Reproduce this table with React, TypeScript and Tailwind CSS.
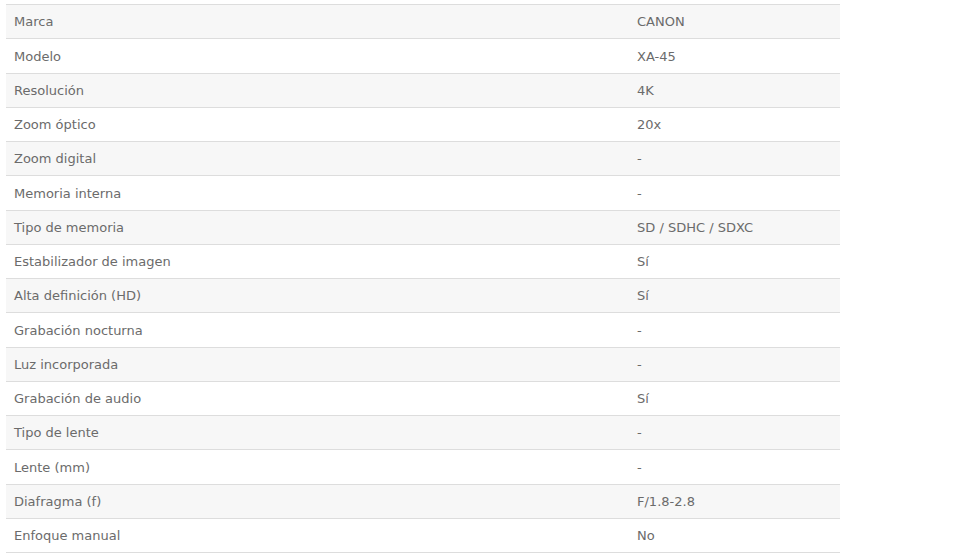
const specs = [
  ["Marca", "CANON"],
  ["Modelo", "XA-45"],
  ["Resolución", "4K"],
  ["Zoom óptico", "20x"],
  ["Zoom digital", "-"],
  ["Memoria interna", "-"],
  ["Tipo de memoria", "SD / SDHC / SDXC"],
  ["Estabilizador de imagen", "Sí"],
  ["Alta definición (HD)", "Sí"],
  ["Grabación nocturna", "-"],
  ["Luz incorporada", "-"],
  ["Grabación de audio", "Sí"],
  ["Tipo de lente", "-"],
  ["Lente (mm)", "-"],
  ["Diafragma (f)", "F/1.8-2.8"],
  ["Enfoque manual", "No"],
];

export default function App() {
  return (
    <div className="w-[960px] h-[558px] overflow-hidden bg-white pt-1 pl-1.5">
      <div className="w-[834px] border-b border-[#dddddd] font-['DejaVu_Sans',sans-serif] text-[13px] text-[#6b6b6b]">
        {specs.map(([label, value], i) => (
          <div
            key={label}
            className={`grid grid-cols-[623px_1fr] h-[34.25px] items-center pt-px border-t border-[#dddddd] ${i % 2 === 0 ? "bg-[#f7f7f7]" : "bg-white"}`}
          >
            <span className="px-2">{label}</span>
            <span className="px-2">{value}</span>
          </div>
        ))}
      </div>
    </div>
  );
}
